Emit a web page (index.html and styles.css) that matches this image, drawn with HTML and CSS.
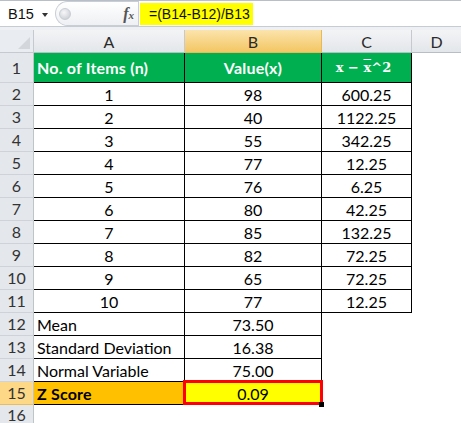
FILE: index.html
```html
<!DOCTYPE html>
<html>
<head>
<meta charset="utf-8">
<link rel="stylesheet" href="styles.css">
</head>
<body>
<div class="fbar">
  <div class="namebox"><span class="ref">B15</span><span class="caret"></span></div>
  <div class="btns"><span class="knob"></span><span class="fx">f<span class="fxx">x</span></span></div>
  <div class="formula"><span class="hl">=(B14-B12)/B13</span></div>
</div>
<div class="gap"></div>
<div class="sheet">
  <div class="corner"><span class="tri"></span></div>
  <div class="ch">A</div>
  <div class="ch sel">B</div>
  <div class="ch">C</div>
  <div class="ch last">D</div>

  <div class="rh r1">1</div>
  <div class="c t g left b">No. of Items (n)</div>
  <div class="c t g b">Value(x)</div>
  <div class="c t g mx">x − <span class="ovl">x</span>^2</div>
  <div class="c"></div>

  <div class="rh">2</div><div class="c t">1</div><div class="c t">98</div><div class="c t">600.25</div><div class="c"></div>
  <div class="rh">3</div><div class="c t">2</div><div class="c t">40</div><div class="c t">1122.25</div><div class="c"></div>
  <div class="rh">4</div><div class="c t">3</div><div class="c t">55</div><div class="c t">342.25</div><div class="c"></div>
  <div class="rh">5</div><div class="c t">4</div><div class="c t">77</div><div class="c t">12.25</div><div class="c"></div>
  <div class="rh">6</div><div class="c t">5</div><div class="c t">76</div><div class="c t">6.25</div><div class="c"></div>
  <div class="rh">7</div><div class="c t">6</div><div class="c t">80</div><div class="c t">42.25</div><div class="c"></div>
  <div class="rh">8</div><div class="c t">7</div><div class="c t">85</div><div class="c t">132.25</div><div class="c"></div>
  <div class="rh">9</div><div class="c t">8</div><div class="c t">82</div><div class="c t">72.25</div><div class="c"></div>
  <div class="rh">10</div><div class="c t">9</div><div class="c t">65</div><div class="c t">72.25</div><div class="c"></div>
  <div class="rh">11</div><div class="c t">10</div><div class="c t">77</div><div class="c t">12.25</div><div class="c"></div>

  <div class="rh">12</div><div class="c t left">Mean</div><div class="c t">73.50</div><div class="c"></div><div class="c"></div>
  <div class="rh">13</div><div class="c t left">Standard Deviation</div><div class="c t">16.38</div><div class="c"></div><div class="c"></div>
  <div class="rh">14</div><div class="c t left">Normal Variable</div><div class="c t">75.00</div><div class="c"></div><div class="c"></div>
  <div class="rh rsel">15</div><div class="c t left b orange">Z Score</div><div class="c t yellow active">0.09<span class="handle"></span></div><div class="c"></div><div class="c"></div>
  <div class="rh r16">16</div><div class="c"></div><div class="c"></div><div class="c"></div><div class="c"></div>
</div>
</body>
</html>
```

FILE: styles.css
```css
* { box-sizing: border-box; margin: 0; padding: 0; }
html, body { background: #fff; }
body {
  width: 461px;
  height: 423px;
  overflow: hidden;
  font-family: Lato, "Noto Sans", sans-serif;
  font-size: 16px;
  color: #000;
}

/* formula bar */
.fbar {
  height: 27px;
  display: flex;
  border-top: 1px solid #b9bfc8;
  border-bottom: 1px solid #c6ccd4;
  background: #fff;
}
.namebox {
  width: 55px;
  display: flex;
  align-items: center;
  padding-left: 8px;
  font-family: "Liberation Sans", Arial, sans-serif;
  font-size: 14.5px;
  color: #111;
}
.caret {
  margin-left: 8px;
  margin-top: 2px;
  width: 0;
  height: 0;
  border-left: 3.5px solid transparent;
  border-right: 3.5px solid transparent;
  border-top: 4px solid #333;
}
.btns {
  width: 83px;
  height: 25px;
  border: 1px solid #c9ced5;
  border-right: none;
  border-radius: 13px 0 0 13px;
  background: linear-gradient(#ffffff, #eef0f3);
  display: flex;
  align-items: center;
  padding-left: 3px;
}
.knob {
  width: 12px;
  height: 12px;
  border-radius: 50%;
  background: radial-gradient(circle at 40% 35%, #f6f7f9, #c3c7cd);
  border: 1px solid #c9cdd3;
}
.fx {
  margin-left: auto;
  margin-right: 4px;
  font-family: "Liberation Serif", "DejaVu Serif", serif;
  font-style: italic;
  font-weight: bold;
  font-size: 16px;
  color: #555;
}
.fxx { font-size: 11px; }
.formula {
  flex: 1;
  display: flex;
  align-items: stretch;
  padding: 2px 0 0 1px;
  border-left: 1px solid #c9ced5;
}
.hl {
  background: #ffff00;
  padding-left: 9px;
  width: 113px;
  height: 22px;
  white-space: nowrap;
  font-family: "Liberation Sans", Arial, sans-serif;
  font-size: 14px;
  line-height: 22px;
  color: #111;
}
.gap {
  height: 3px;
  background: #eef0f3;
}

/* grid */
.sheet {
  display: grid;
  grid-template-columns: 34px 151px 137px 90px 49px;
  grid-template-rows: 23px 30px repeat(14, 23px) 18px;
}
.corner {
  background: #e9ecf0;
  border-right: 1px solid #c6cad0;
  border-bottom: 1px solid #c6cad0;
  position: relative;
}
.tri {
  position: absolute;
  right: 3px;
  bottom: 3px;
  width: 0;
  height: 0;
  border-left: 12px solid transparent;
  border-bottom: 12px solid #d3d6db;
}
.ch {
  background: linear-gradient(#f3f4f6, #e3e6ea);
  border-right: 1px solid #c6cad0;
  border-bottom: 1px solid #b8bec7;
  display: flex;
  align-items: center;
  justify-content: center;
  color: #2a2a2a;
  padding-top: 1px;
}
.ch.last { border-right: none; }
.ch.sel {
  background: linear-gradient(#fbe4ac, #f3c663);
  border-right: 1px solid #e9b955;
  border-bottom: 1px solid #e9b955;
}
.rh {
  background: #e4e7ec;
  border-right: 1px solid #bfc4cb;
  border-bottom: 1px solid #cfd3d9;
  display: flex;
  align-items: center;
  justify-content: center;
  color: #333;
  line-height: 16px;
}
.rh.r16 { border-bottom: none; padding-top: 1px; }
.rh.rsel { background: #fdd987; border-bottom-color: #e7bd64; }

.c {
  display: flex;
  align-items: center;
  justify-content: center;
  white-space: nowrap;
}
.c.t {
  border-right: 1px solid #000;
  border-bottom: 1px solid #000;
}
.c.left { justify-content: flex-start; padding-left: 3px; }
.c.b { font-weight: bold; letter-spacing: 0.2px; }
.g { background: #00b050; color: #fff; }
.mx {
  font-family: "DejaVu Serif", "Liberation Serif", serif;
  font-weight: bold;
  font-size: 13px;
  white-space: pre;
  padding-right: 6px;
}
.ovl { text-decoration: overline; }
.orange { background: #ffc000; }
.yellow { background: #ffff00; }
.active { position: relative; }
.active::after {
  content: "";
  position: absolute;
  left: -2px;
  top: -2px;
  right: -2px;
  bottom: -1px;
  border: 3px solid #ff0000;
}
.handle {
  position: absolute;
  right: -3px;
  bottom: -3px;
  width: 5px;
  height: 5px;
  background: #000;
  z-index: 2;
}
```
